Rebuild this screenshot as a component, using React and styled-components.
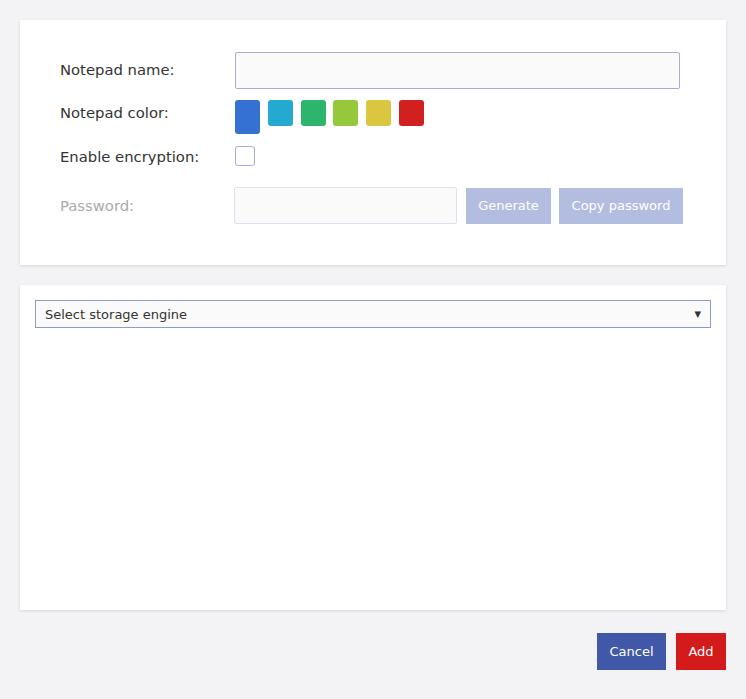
import React from 'react';
import styled, { createGlobalStyle } from 'styled-components';

const Global = createGlobalStyle`
  html, body { margin: 0; padding: 0; background: #f3f3f6; }
  body { font-family: "DejaVu Sans", "Liberation Sans", sans-serif; color: #333; }
  * { box-sizing: border-box; }
`;

const Page = styled.div`
  padding: 20px 20px 0 20px;
  display: flex;
  flex-direction: column;
  gap: 20px;
`;

const Card = styled.div`
  background: #fff;
  box-shadow: 0 1px 3px rgba(0,0,0,0.12);
  height: ${p => p.$h}px;
  padding: ${p => p.$pad};
`;

const FormGrid = styled.div`
  display: grid;
  grid-template-columns: 175px 1fr;
  align-items: center;
`;

const Label = styled.div`
  font-size: 14.8px;
  color: ${p => (p.$disabled ? '#aaa' : '#333')};
  height: ${p => p.$h}px;
  display: flex;
  align-items: center;
  padding-bottom: ${p => p.$pb || 0}px;
  padding-top: ${p => p.$pt || 0}px;
`;

const Field = styled.div`
  display: flex;
  align-items: ${p => p.$align || 'center'};
  height: ${p => p.$h}px;
  gap: ${p => p.$gap || 0}px;
  padding-top: ${p => p.$pt || 0}px;
`;

const TextInput = styled.input`
  width: ${p => p.$w}px;
  height: 37px;
  border: 1px solid ${p => (p.$disabled ? '#dde0ef' : '#a7aed6')};
  border-radius: 2px;
  background: #fafafa;
  outline: none;
  font: inherit;
  margin-left: ${p => p.$ml || 0}px;
`;

const Swatches = styled.div`
  display: flex;
  gap: 7.8px;
  align-items: flex-start;
`;

const Swatch = styled.div`
  width: 25px;
  height: ${p => (p.$selected ? 34 : 26)}px;
  border-radius: 3px;
  background: ${p => p.$c};
`;

const Checkbox = styled.div`
  width: 20px;
  height: 20px;
  border: 1.5px solid #a5add8;
  border-radius: 3px;
  background: #fff;
`;

const Btn = styled.button`
  border: none;
  border-radius: 0;
  color: #fff;
  font-family: "DejaVu Sans", sans-serif;
  font-size: 13px;
  background: ${p => p.$bg};
  height: ${p => p.$h}px;
  width: ${p => p.$w}px;
  padding: 0;
  margin-left: ${p => p.$ml || 0}px;
  cursor: pointer;
`;

const Select = styled.div`
  height: 28px;
  border: 1px solid #8f9bcf;
  background: #fafafa;
  display: flex;
  align-items: center;
  justify-content: space-between;
  padding: 0 9px 0 9px;
  font-size: 13px;
  color: #333;
`;

const Arrow = styled.span`
  font-size: 8.5px;
  color: #333;
`;

const Footer = styled.div`
  display: flex;
  justify-content: flex-end;
  gap: 10px;
  margin-top: 3px;
`;

const colors = ['#3571d0', '#24a9d0', '#2db56e', '#95c83a', '#dac63f', '#d22021'];

export default function App() {
  return (
    <>
      <Global />
      <Page>
        <Card $h={245} $pad="32px 40px 0 40px">
          <FormGrid>
            <Label $h={37} $pb={3}>Notepad name:</Label>
            <Field $h={37}>
              <TextInput $w={445} />
            </Field>
            <Label $h={46} $pt={1}>Notepad color:</Label>
            <Field $h={46} $align="flex-start" $pt={11}>
              <Swatches>
                {colors.map((c, i) => (
                  <Swatch key={c} $c={c} $selected={i === 0} />
                ))}
              </Swatches>
            </Field>
            <Label $h={41} $pt={1}>Enable encryption:</Label>
            <Field $h={41}>
              <Checkbox />
            </Field>
            <Label $h={58} $pt={1} $disabled>Password:</Label>
            <Field $h={58} $gap={8} $pt={1}>
              <TextInput $w={223} $disabled $ml={-1} />
              <Btn $bg="#b3bddf" $h={36} $w={85} $ml={1}>Generate</Btn>
              <Btn $bg="#b3bddf" $h={36} $w={124}>Copy password</Btn>
            </Field>
          </FormGrid>
        </Card>
        <Card $h={325} $pad="15px">
          <Select>
            <span>Select storage engine</span>
            <Arrow>▼</Arrow>
          </Select>
        </Card>
        <Footer>
          <Btn $bg="#4158a9" $h={37} $w={69}>Cancel</Btn>
          <Btn $bg="#d31b1c" $h={37} $w={50}>Add</Btn>
        </Footer>
      </Page>
    </>
  );
}
